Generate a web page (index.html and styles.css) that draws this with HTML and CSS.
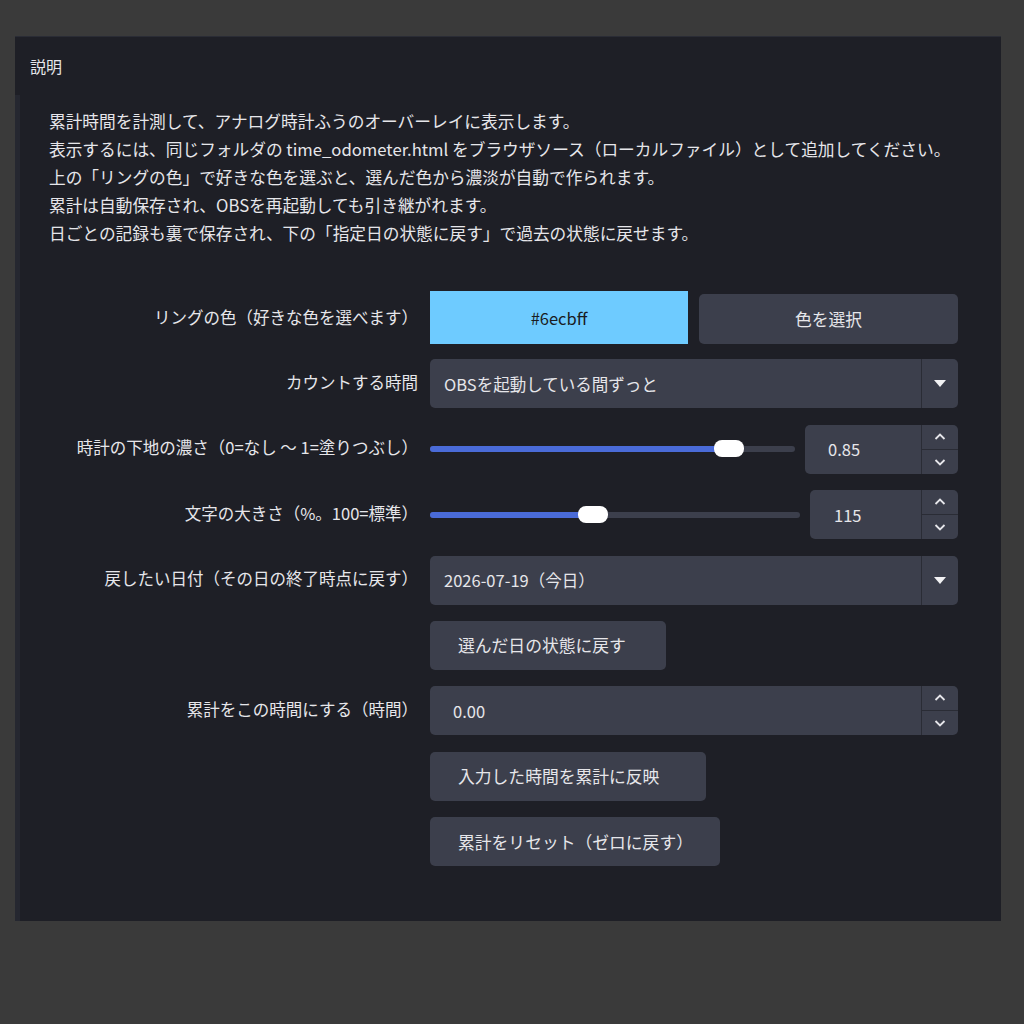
FILE: index.html
```html
<!DOCTYPE html>
<html lang="ja">
<head>
    <meta charset="UTF-8">
    <title>時計オーバーレイ設定</title>
    <link rel="stylesheet" href="styles.css">
</head>
<body>
    <div class="panel">
        <div class="panel-title">説明</div>
        <div class="panel-body">
            <div class="desc">
                <p>累計時間を計測して、アナログ時計ふうのオーバーレイに表示します。</p>
                <p>表示するには、同じフォルダの time_odometer.html をブラウザソース（ローカルファイル）として追加してください。</p>
                <p>上の「リングの色」で好きな色を選ぶと、選んだ色から濃淡が自動で作られます。</p>
                <p>累計は自動保存され、OBSを再起動しても引き継がれます。</p>
                <p>日ごとの記録も裏で保存され、下の「指定日の状態に戻す」で過去の状態に戻せます。</p>
            </div>

            <div class="form">
                <div class="label">リングの色（好きな色を選べます）</div>
                <div class="field split">
                    <div class="swatch">#6ecbff</div>
                    <div class="btn wide">色を選択</div>
                </div>

                <div class="label">カウントする時間</div>
                <div class="field">
                    <div class="combo">
                        <span class="combo-text">OBSを起動している間ずっと</span>
                        <span class="combo-arrow"><span class="tri"></span></span>
                    </div>
                </div>

                <div class="label">時計の下地の濃さ（0=なし 〜 1=塗りつぶし）</div>
                <div class="field split">
                    <div class="slider">
                        <div class="track"><div class="fill" style="width: 82%"></div></div>
                        <div class="thumb" style="left: 82%"></div>
                    </div>
                    <div class="spin spin-a">
                        <span class="spin-text">0.85</span>
                        <span class="spin-btns">
                            <span class="spin-up"><svg width="14" height="10" viewBox="0 0 14 10"><path d="M2.5 7 L7 2.5 L11.5 7" fill="none" stroke="#e6e6ea" stroke-width="1.8"/></svg></span>
                            <span class="spin-down"><svg width="14" height="10" viewBox="0 0 14 10"><path d="M2.5 3 L7 7.5 L11.5 3" fill="none" stroke="#e6e6ea" stroke-width="1.8"/></svg></span>
                        </span>
                    </div>
                </div>

                <div class="label">文字の大きさ（%。100=標準）</div>
                <div class="field split">
                    <div class="slider">
                        <div class="track"><div class="fill" style="width: 44%"></div></div>
                        <div class="thumb" style="left: 44%"></div>
                    </div>
                    <div class="spin spin-b">
                        <span class="spin-text">115</span>
                        <span class="spin-btns">
                            <span class="spin-up"><svg width="14" height="10" viewBox="0 0 14 10"><path d="M2.5 7 L7 2.5 L11.5 7" fill="none" stroke="#e6e6ea" stroke-width="1.8"/></svg></span>
                            <span class="spin-down"><svg width="14" height="10" viewBox="0 0 14 10"><path d="M2.5 3 L7 7.5 L11.5 3" fill="none" stroke="#e6e6ea" stroke-width="1.8"/></svg></span>
                        </span>
                    </div>
                </div>

                <div class="label">戻したい日付（その日の終了時点に戻す）</div>
                <div class="field">
                    <div class="combo">
                        <span class="combo-text">2026-07-19（今日）</span>
                        <span class="combo-arrow"><span class="tri"></span></span>
                    </div>
                </div>

                <div class="label"></div>
                <div class="field">
                    <div class="btn btn-restore">選んだ日の状態に戻す</div>
                </div>

                <div class="label">累計をこの時間にする（時間）</div>
                <div class="field">
                    <div class="spin spin-full">
                        <span class="spin-text">0.00</span>
                        <span class="spin-btns">
                            <span class="spin-up"><svg width="14" height="10" viewBox="0 0 14 10"><path d="M2.5 7 L7 2.5 L11.5 7" fill="none" stroke="#e6e6ea" stroke-width="1.8"/></svg></span>
                            <span class="spin-down"><svg width="14" height="10" viewBox="0 0 14 10"><path d="M2.5 3 L7 7.5 L11.5 3" fill="none" stroke="#e6e6ea" stroke-width="1.8"/></svg></span>
                        </span>
                    </div>
                </div>

                <div class="label"></div>
                <div class="field">
                    <div class="btn btn-apply">入力した時間を累計に反映</div>
                </div>

                <div class="label"></div>
                <div class="field">
                    <div class="btn btn-reset">累計をリセット（ゼロに戻す）</div>
                </div>
            </div>
        </div>
    </div>
</body>
</html>
```

FILE: styles.css
```css
body {
    margin: 0;
    background: #3a3a3a;
    font-family: "Noto Sans CJK JP", "Noto Sans", sans-serif;
    color: #e6e6ea;
    width: 1024px;
    height: 1024px;
    overflow: hidden;
}
.panel {
    margin: 36px 0 0 15px;
    width: 986px;
    height: 885px;
    background: #1e1f26;
    border-top: 1px solid #2a2c35;
    box-sizing: border-box;
    display: flex;
    flex-direction: column;
}
.panel-title {
    height: 58px;
    padding-left: 15px;
    font-size: 16px;
    line-height: 58px;
}
.panel-body {
    flex: 1;
    border-left: 5px solid #252730;
    padding: 12px 0 0 29px;
}
.desc p {
    margin: 0;
    font-size: 16.7px;
    line-height: 28px;
    white-space: nowrap;
}
.form {
    margin: 47px 0 0 -29px;
    display: grid;
    grid-template-columns: 398px 528px;
    column-gap: 12px;
    row-gap: 16.4px;
}
.label {
    font-size: 16.5px;
    text-align: right;
    align-self: center;
    white-space: nowrap;
    margin-top: -4px;
}
.field {
    display: flex;
    height: 49px;
}
.split {
    gap: 10px;
    align-items: center;
}
.swatch {
    width: 258px;
    height: 53px;
    margin-top: -2px;
    background: #6ecbff;
    color: #1a1c22;
    font-size: 16.5px;
    display: flex;
    align-items: center;
    justify-content: center;
}
.btn {
    background: #3c3f4c;
    border-radius: 5px;
    font-size: 16.8px;
    padding: 0 28px;
    box-sizing: border-box;
    display: flex;
    align-items: center;
    height: 49px;
}
.btn.wide {
    flex: 1;
    justify-content: center;
    height: 50px;
    margin-left: 1px;
}
.btn-restore {
    width: 236px;
}
.btn-apply {
    width: 276px;
}
.btn-reset {
    width: 290px;
}
.combo {
    flex: 1;
    display: flex;
    background: #3c3f4c;
    border-radius: 5px;
    font-size: 16.5px;
}
.combo-text {
    flex: 1;
    display: flex;
    align-items: center;
    padding-left: 14px;
}
.combo-arrow {
    width: 36px;
    border-left: 1px solid #2a2c35;
    display: flex;
    align-items: center;
    justify-content: center;
}
.tri {
    width: 0;
    height: 0;
    border-left: 6px solid transparent;
    border-right: 6px solid transparent;
    border-top: 7px solid #f2f2f4;
}
.slider {
    flex: 1;
    position: relative;
    height: 18px;
    display: flex;
    align-items: center;
}
.track {
    width: 100%;
    height: 6px;
    border-radius: 3px;
    background: #3c3f4c;
    overflow: hidden;
}
.fill {
    height: 100%;
    background: #4a6bd8;
}
.thumb {
    position: absolute;
    top: 0;
    width: 30px;
    height: 17px;
    margin-left: -15px;
    border-radius: 8px;
    background: #ffffff;
}
.spin {
    display: flex;
    background: #3c3f4c;
    border-radius: 5px;
    height: 49px;
    font-size: 16.5px;
}
.spin-a {
    width: 153px;
}
.spin-b {
    width: 148px;
}
.spin-full {
    flex: 1;
}
.spin-text {
    flex: 1;
    display: flex;
    align-items: center;
    padding-left: 23px;
}
.spin-b .spin-text {
    padding-left: 24px;
}
.spin-btns {
    width: 36px;
    border-left: 1px solid #2a2c35;
    display: flex;
    flex-direction: column;
}
.spin-up,
.spin-down {
    flex: 1;
    display: flex;
    align-items: center;
    justify-content: center;
}
.spin-up {
    border-bottom: 1px solid #2a2c35;
}
```
